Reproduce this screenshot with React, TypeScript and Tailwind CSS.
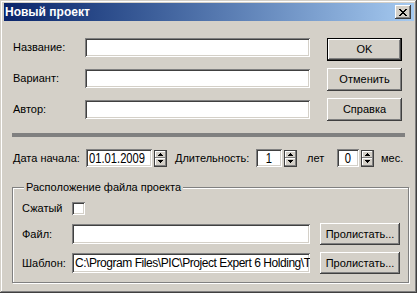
import type { ReactNode } from "react";

const raised =
	"bg-[#d4d0c8] shadow-[inset_-1px_-1px_#404040,inset_1px_1px_#ffffff,inset_-2px_-2px_#808080,inset_2px_2px_#d4d0c8]";
const raisedThin = "bg-[#d4d0c8] shadow-[inset_-1px_-1px_#808080,inset_1px_1px_#ffffff]";
const sunken =
	"bg-white shadow-[inset_1px_1px_#808080,inset_-1px_-1px_#ffffff,inset_2px_2px_#404040,inset_-2px_-2px_#d4d0c8]";

// classic 8x7 close cross
const CROSS = [
	"##....##",
	".##..##.",
	"..####..",
	"...##...",
	"..####..",
	".##..##.",
	"##....##",
];

function CloseGlyph() {
	return (
		<svg width="8" height="7" viewBox="0 0 8 7" shapeRendering="crispEdges">
			{CROSS.flatMap((row, y) =>
				row.split("").map((c, x) =>
					c === "#" ? <rect key={`${x}-${y}`} x={x} y={y} width="1" height="1" fill="#000" /> : null,
				),
			)}
		</svg>
	);
}

function Arrow({ down }: { down?: boolean }) {
	return (
		<svg width="5" height="3" viewBox="0 0 5 3" shapeRendering="crispEdges">
			<path
				d={down ? "M0 0h5v1H4v1H3v1H2V2H1V1H0z" : "M2 0h1v1h1v1h1v1H0V2h1V1h1z"}
				fill="#000"
			/>
		</svg>
	);
}

function Spin() {
	return (
		<div className="ml-[2px] flex h-[17px] w-[13px] flex-col border border-[#404040] bg-[#d4d0c8]">
			<div className={`flex flex-1 items-center justify-center ${raisedThin}`}>
				<Arrow />
			</div>
			<div className={`flex flex-1 items-center justify-center ${raisedThin}`}>
				<Arrow down />
			</div>
		</div>
	);
}

function Btn({ children, def, className = "" }: { children: ReactNode; def?: boolean; className?: string }) {
	return (
		<div
			className={`flex items-center justify-center ${def ? "border border-black" : ""} ${className}`}
		>
			<div className={`flex h-full w-full items-center justify-center ${raised}`}>{children}</div>
		</div>
	);
}

function Field({ children, className = "" }: { children?: ReactNode; className?: string }) {
	return (
		<div className={`flex items-center overflow-hidden whitespace-nowrap ${sunken} ${className}`}>
			{children}
		</div>
	);
}

export default function App() {
	return (
		<div className="font-['Liberation_Sans',Arial,sans-serif] text-[11px] leading-[13px] text-black">
			{/* window */}
			<div className="flex h-[293px] w-[417px] flex-col bg-[#d4d0c8] px-[3px] pt-[3px] shadow-[inset_-1px_-1px_#404040,inset_1px_1px_#d4d0c8,inset_-2px_-2px_#808080,inset_2px_2px_#ffffff]">
				{/* title bar */}
				<div className="ml-[1px] flex h-[18px] shrink-0 items-center justify-between bg-linear-to-r from-[#0a246a] to-[#a6caf0] pl-[1px] pr-[3px]">
					<span className="text-[12px] font-bold text-white">Новый проект</span>
					<div className={`flex h-[14px] w-[16px] items-center justify-center ${raised}`}>
						<CloseGlyph />
					</div>
				</div>

				{/* top fields + buttons */}
				<div className="mt-[17px] flex items-start pl-[10px]">
					<div className="grid grid-cols-[72px_225px] items-center gap-y-[12px]">
						<span>Название:</span>
						<Field className="h-[19px]" />
						<span>Вариант:</span>
						<Field className="h-[19px]" />
						<span>Автор:</span>
						<Field className="h-[19px]" />
					</div>
					<div className="ml-[17px] flex w-[75px] flex-col gap-[7px]">
						<Btn def className="h-[23px]">
							OK
						</Btn>
						<Btn className="h-[23px]">Отменить</Btn>
						<Btn className="h-[23px]">Справка</Btn>
					</div>
				</div>

				{/* separator */}
				<div className="mt-[12px] ml-[9px] h-[4px] w-[393px] bg-[#808080]" />

				{/* dates */}
				<div className="mt-[12px] flex h-[18px] items-center pl-[10px]">
					<span className="w-[73px]">Дата начала:</span>
					<Field className="h-[18px] w-[66px] pl-[3px]">
						<span className="inline-block origin-left scale-x-[0.8] text-[14px] leading-none">01.01.2009</span>
					</Field>
					<Spin />
					<span className="ml-[8px] w-[81px]">Длительность:</span>
					<Field className="h-[18px] w-[26px] justify-center">
						<span className="inline-block scale-x-[0.8] text-[14px] leading-none">1</span>
					</Field>
					<Spin />
					<span className="ml-[10px] w-[30px]">лет</span>
					<Field className="h-[18px] w-[22px] justify-center">
						<span className="inline-block scale-x-[0.8] text-[14px] leading-none">0</span>
					</Field>
					<Spin />
					<span className="ml-[7px]">мес.</span>
				</div>

				{/* group box */}
				<div className="relative mt-[20px] ml-[9px] h-[96px] w-[397px] border border-[#808080] pl-[9px] pt-[14px] shadow-[inset_1px_1px_#ffffff,1px_1px_#ffffff]">
					<span className="absolute left-[11px] top-[-7px] bg-[#d4d0c8] px-[2px]">
						Расположение файла проекта
					</span>
					<div className="flex h-[13px] items-center">
						<span className="w-[50px]">Сжатый</span>
						<div className={`h-[13px] w-[13px] ${sunken}`} />
					</div>
					<div className="mt-[8px] flex h-[22px] items-center">
						<span className="w-[50px]">Файл:</span>
						<Field className="h-[20px] w-[238px]" />
						<Btn className="ml-[10px] h-[22px] w-[80px]">Пролистать...</Btn>
					</div>
					<div className="mt-[7px] flex h-[22px] items-center">
						<span className="w-[50px]">Шаблон:</span>
						<Field className="h-[20px] w-[238px] pl-[3px]">
							<span className="text-[12px] leading-none tracking-[-0.45px]">
								C:\Program Files\PIC\Project Expert 6 Holding\T
							</span>
						</Field>
						<Btn className="ml-[10px] h-[22px] w-[80px]">Пролистать...</Btn>
					</div>
				</div>
			</div>
		</div>
	);
}
